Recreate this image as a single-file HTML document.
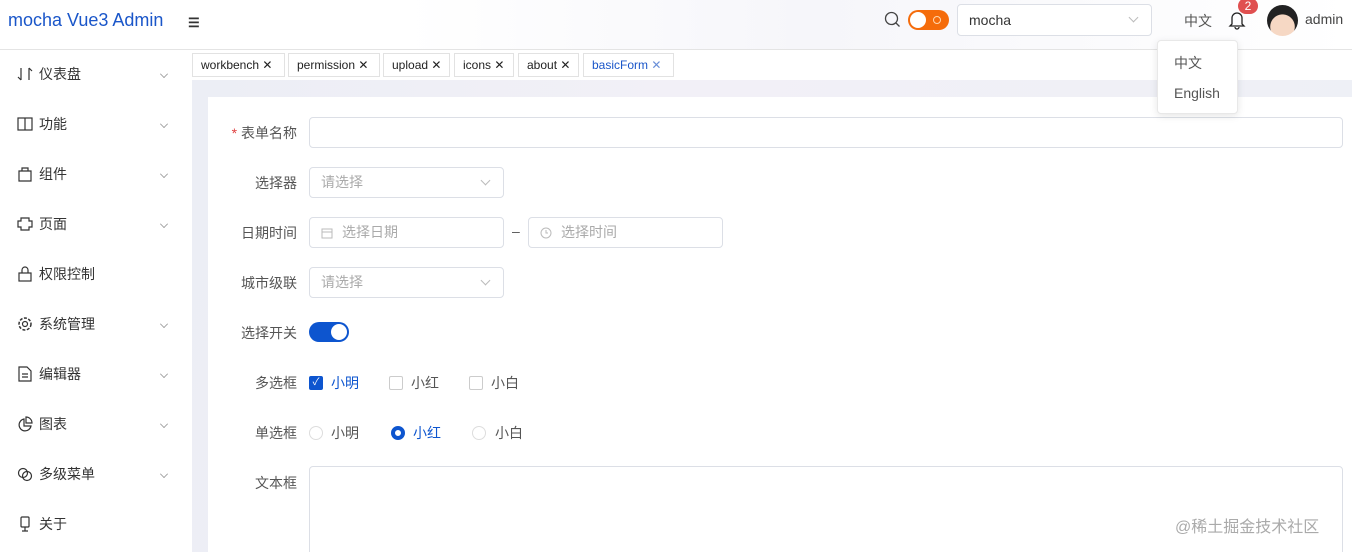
<!DOCTYPE html>
<html><head><meta charset="utf-8"><style>
*{box-sizing:border-box;margin:0;padding:0}
html,body{width:1352px;height:552px;overflow:hidden}
body{font-family:"Liberation Sans","Noto Sans CJK SC",sans-serif;font-size:14px;color:#333;background:#fff;position:relative}
.hdr{position:absolute;left:0;top:0;width:1352px;height:50px;border-bottom:1px solid #e4e4e4;background:linear-gradient(90deg,#fff 30%,#f6f6fa 60%,#fff 100%)}
.logo{position:absolute;left:8px;top:10px;font-size:18px;color:#1a56c9}
.side{position:absolute;left:0;top:50px;width:192px;height:502px;background:#fff}
.mi{position:absolute;left:17px;height:20px;display:flex;align-items:center;font-size:14px;color:#333}
.mi svg{margin-right:6px}
.chev{position:absolute;left:160px;width:8px;height:8px;border-right:1px solid #888;border-bottom:1px solid #888;transform:rotate(45deg) scale(.7)}
.main{position:absolute;left:192px;top:80px;width:1160px;height:472px;background:linear-gradient(100deg,#eceef5,#f2f0f7 40%,#eef0f6)}
.tabs{position:absolute;left:192px;top:50px;width:1160px;height:30px;background:#fff}
.tab{position:absolute;top:3px;height:24px;border:1px solid #e2e2e2;font-size:12px;line-height:22px;padding-left:8px;color:#222;background:#fff;white-space:nowrap;overflow:hidden}
.card{position:absolute;left:208px;top:97px;width:1144px;height:455px;background:#fff;overflow:hidden}
.lbl{position:absolute;right:1055px;font-size:14px;color:#555;text-align:right;white-space:nowrap}
.inp{position:absolute;border:1px solid #dcdfe6;border-radius:4px;background:#fff;height:31px;font-size:14px;color:#aaa;line-height:29px;padding-left:11px}
.arr{position:absolute;right:14px;top:9px;width:7px;height:7px;border-right:1px solid #bbb;border-bottom:1px solid #bbb;transform:rotate(45deg)}
.cb{position:absolute;width:14px;height:14px;border:1px solid #ccc;border-radius:2px;background:#fff}
.rd{position:absolute;width:14px;height:14px;border:1px solid #ddd;border-radius:50%;background:#fff}
.t{position:absolute;font-size:14px;color:#555}
</style></head><body>
<div class="hdr">
 <div class="logo">mocha Vue3 Admin</div>
 <div style="position:absolute;left:188px;top:15px;font-size:13px;font-weight:bold">☰</div>
 <svg style="position:absolute;left:884px;top:11px" width="17" height="17" viewBox="0 0 17 17"><circle cx="7.5" cy="7.5" r="6" fill="none" stroke="#444" stroke-width="1.3"/><path d="M12 12l3.5 3.5" stroke="#444" stroke-width="1.3"/></svg>
 <div style="position:absolute;left:908px;top:10px;width:41px;height:20px;border-radius:10px;background:#f56c0b"><div style="position:absolute;left:2px;top:2px;width:16px;height:16px;border-radius:50%;background:#fff"></div><div style="position:absolute;left:25px;top:6px;width:8px;height:8px;border:1px solid #ffd8b0;border-radius:50%"></div></div>
 <div class="inp" style="left:957px;top:4px;width:195px;height:32px;color:#333;line-height:30px">mocha<div class="arr"></div></div>
 <div style="position:absolute;left:1184px;top:11px;color:#555">中文</div>
 <svg style="position:absolute;left:1228px;top:10px" width="18" height="20" viewBox="0 0 18 20"><path d="M4 14V8a5 5 0 0110 0v6l2 2H2z" fill="none" stroke="#222" stroke-width="1.3"/><path d="M7 17a2 2 0 004 0" fill="none" stroke="#222" stroke-width="1.3"/></svg>
 <div style="position:absolute;left:1238px;top:-2px;width:20px;height:16px;border-radius:8px;background:#e05050;color:#fff;font-size:12px;text-align:center;line-height:16px">2</div>
 <div style="position:absolute;left:1267px;top:5px;width:31px;height:31px;border-radius:50%;background:radial-gradient(circle at 50% 70%,#f6d8c4 45%,#222 47%)"></div>
 <div style="position:absolute;left:1305px;top:11px;color:#444">admin</div>
</div>
<div class="side">
 <div class="mi" style="top:14px"><svg width="16" height="16"><path d="M4 2v12M1 11l3 3M12 14V2M15 5l-3-3" stroke="#333" fill="none" stroke-width="1.2"/></svg>仪表盘</div><div class="chev" style="top:20px"></div>
 <div class="mi" style="top:64px"><svg width="16" height="16"><rect x="1" y="2" width="14" height="12" fill="none" stroke="#333" stroke-width="1.2"/><path d="M8 2v12" stroke="#333" stroke-width="1.2"/></svg>功能</div><div class="chev" style="top:70px"></div>
 <div class="mi" style="top:114px"><svg width="16" height="16"><path d="M2 5h12v10H2zM5 5V2h6v3" fill="none" stroke="#333" stroke-width="1.2"/></svg>组件</div><div class="chev" style="top:120px"></div>
 <div class="mi" style="top:164px"><svg width="16" height="16"><path d="M4 2h8v3h3v6h-3v3H4v-3H1V5h3z" fill="none" stroke="#333" stroke-width="1.2"/></svg>页面</div><div class="chev" style="top:170px"></div>
 <div class="mi" style="top:214px"><svg width="16" height="16"><rect x="2" y="7" width="12" height="8" fill="none" stroke="#333" stroke-width="1.2"/><path d="M5 7V4a3 3 0 016 0v3" fill="none" stroke="#333" stroke-width="1.2"/></svg>权限控制</div>
 <div class="mi" style="top:264px"><svg width="16" height="16"><circle cx="8" cy="8" r="6" fill="none" stroke="#333" stroke-width="1.5" stroke-dasharray="3 1.5"/><circle cx="8" cy="8" r="2.5" fill="none" stroke="#333" stroke-width="1.2"/></svg>系统管理</div><div class="chev" style="top:270px"></div>
 <div class="mi" style="top:314px"><svg width="16" height="16"><path d="M2 1h8l4 4v10H2z M5 8h6M5 11h6" fill="none" stroke="#333" stroke-width="1.2"/></svg>编辑器</div><div class="chev" style="top:320px"></div>
 <div class="mi" style="top:364px"><svg width="16" height="16"><path d="M7 3a6 6 0 107 7H7z M9 1v6h6a6 6 0 00-6-6z" fill="none" stroke="#333" stroke-width="1.2"/></svg>图表</div><div class="chev" style="top:370px"></div>
 <div class="mi" style="top:414px"><svg width="16" height="16"><circle cx="6" cy="7" r="4.5" fill="none" stroke="#333" stroke-width="1.2"/><circle cx="10" cy="10" r="4.5" fill="none" stroke="#333" stroke-width="1.2"/></svg>多级菜单</div><div class="chev" style="top:420px"></div>
 <div class="mi" style="top:464px"><svg width="16" height="16"><rect x="4" y="1" width="8" height="10" rx="1" fill="none" stroke="#333" stroke-width="1.2"/><path d="M8 11v4M5 15h6" stroke="#333" stroke-width="1.2"/></svg>关于</div>
</div>
<div class="tabs">
 <div class="tab" style="left:0;width:93px">workbench ✕</div>
 <div class="tab" style="left:96px;width:92px">permission ✕</div>
 <div class="tab" style="left:191px;width:67px">upload ✕</div>
 <div class="tab" style="left:262px;width:60px">icons ✕</div>
 <div class="tab" style="left:326px;width:61px">about ✕</div>
 <div class="tab" style="left:391px;width:91px;color:#1a56c9">basicForm <span style="color:#6a8fd8">✕</span></div>
</div>
<div class="main"></div>
<div class="card">
 <div class="lbl" style="top:26px"><span style="color:#e04040">* </span>表单名称</div>
 <div class="inp" style="left:101px;top:20px;width:1034px"></div>
 <div class="lbl" style="top:76px">选择器</div>
 <div class="inp" style="left:101px;top:70px;width:195px">请选择<div class="arr"></div></div>
 <div class="lbl" style="top:126px">日期时间</div>
 <div class="inp" style="left:101px;top:120px;width:195px;padding-left:32px">选择日期<svg style="position:absolute;left:11px;top:9px" width="12" height="12"><rect x="1" y="2" width="10" height="9" fill="none" stroke="#bbb"/><path d="M1 5h10" stroke="#bbb"/></svg></div>
 <div class="t" style="left:304px;top:126px">–</div>
 <div class="inp" style="left:320px;top:120px;width:195px;padding-left:32px">选择时间<svg style="position:absolute;left:11px;top:9px" width="12" height="12"><circle cx="6" cy="6" r="5" fill="none" stroke="#bbb"/><path d="M6 3v3h2" fill="none" stroke="#bbb"/></svg></div>
 <div class="lbl" style="top:176px">城市级联</div>
 <div class="inp" style="left:101px;top:170px;width:195px">请选择<div class="arr"></div></div>
 <div class="lbl" style="top:226px">选择开关</div>
 <div style="position:absolute;left:101px;top:225px;width:40px;height:20px;border-radius:10px;background:#0d55cf"><div style="position:absolute;right:2px;top:2px;width:16px;height:16px;border-radius:50%;background:#fff"></div></div>
 <div class="lbl" style="top:276px">多选框</div>
 <div class="cb" style="left:101px;top:279px;background:#0d55cf;border-color:#0d55cf;color:#fff;font-size:10px;line-height:12px;text-align:center">✓</div>
 <div class="t" style="left:123px;top:276px;color:#0d55cf">小明</div>
 <div class="cb" style="left:181px;top:279px"></div><div class="t" style="left:203px;top:276px">小红</div>
 <div class="cb" style="left:261px;top:279px"></div><div class="t" style="left:283px;top:276px">小白</div>
 <div class="lbl" style="top:326px">单选框</div>
 <div class="rd" style="left:101px;top:329px"></div><div class="t" style="left:123px;top:326px">小明</div>
 <div class="rd" style="left:183px;top:329px;border:4px solid #0d55cf"></div><div class="t" style="left:205px;top:326px;color:#0d55cf">小红</div>
 <div class="rd" style="left:264px;top:329px"></div><div class="t" style="left:287px;top:326px">小白</div>
 <div class="lbl" style="top:376px">文本框</div>
 <div class="inp" style="left:101px;top:369px;width:1034px;height:100px"></div>
</div>
<div style="position:absolute;left:1157px;top:40px;width:81px;height:74px;background:#fff;border:1px solid #e8e8e8;border-radius:4px;box-shadow:0 2px 8px rgba(0,0,0,.1)">
 <div style="position:absolute;left:16px;top:12px;color:#555">中文</div>
 <div style="position:absolute;left:16px;top:44px;color:#555">English</div>
</div>
<div style="position:absolute;left:1175px;top:513px;font-size:16px;color:#aaa">@稀土掘金技术社区</div>
</body></html>
